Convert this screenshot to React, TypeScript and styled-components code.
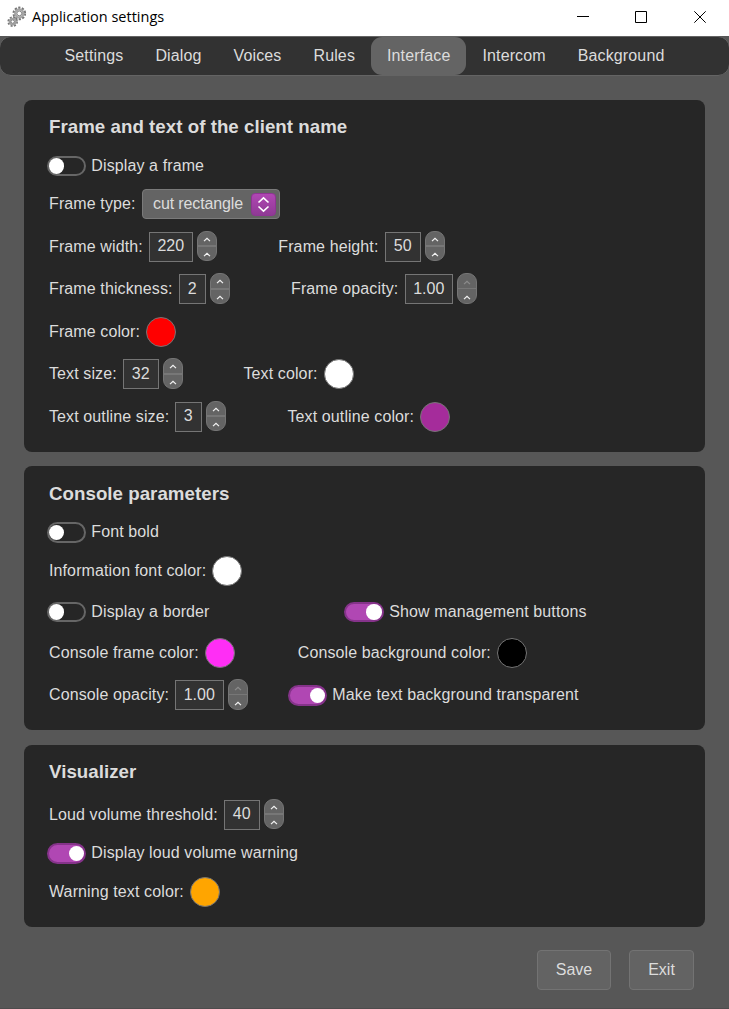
import React from 'react';
import styled, { createGlobalStyle } from 'styled-components';

const GlobalStyle = createGlobalStyle`
  * { box-sizing: border-box; }
  body {
    margin: 0;
    background: #575757;
    color: #dcdcdc;
    font: 16px "Liberation Sans", Arial, sans-serif;
  }
`;

const Window = styled.div`
  display: flex;
  flex-direction: column;
  height: 1009px;
  overflow: hidden;
  background: #575757;
  border-bottom: 1px solid #4e4c4d;
`;

const TitleBar = styled.header`
  display: flex;
  align-items: center;
  height: 36px;
  flex: none;
  padding: 0 23px 2px 7px;
  background: #fff;
  color: #000;
`;

const AppTitle = styled.span`
  flex: 1;
  margin-left: 5px;
  font: 14.5px/34px "Open Sans", "Noto Sans", sans-serif;
`;

const WindowControls = styled.div`
  display: grid;
  grid-template-columns: 58px 59px 12px;
`;

const Nav = styled.nav`
  display: flex;
  justify-content: center;
  height: 40px;
  flex: none;
  margin: 0 -1px;
  border: 1px solid #646464;
  border-radius: 12px;
  background: #323232;
  letter-spacing: 0.13px;
`;

const Tab = styled.a<{ $active?: boolean }>`
  padding: 0 16px;
  line-height: 37px;
  border-radius: 11px;
  background: ${p => (p.$active ? '#646464' : 'transparent')};
`;

const Cards = styled.main`
  display: flex;
  flex-direction: column;
  padding: 24px 24px 0;
`;

const Card = styled.section<{ $gap?: number }>`
  margin-bottom: ${p => p.$gap ?? 0}px;
  padding: 0 25px 20px;
  border-radius: 8px;
  background: #262626;
`;

const Heading = styled.h3<{ $h: number; $top?: number }>`
  height: ${p => p.$h}px;
  margin: 0;
  padding-top: ${p => p.$top ?? 16}px;
  font-size: 18.72px;
  line-height: 21px;
  font-weight: bold;
  letter-spacing: 0.03px;
`;

const Row = styled.div<{ $h?: number }>`
  display: flex;
  align-items: flex-start;
  height: ${p => p.$h ?? 30}px;
  white-space: nowrap;
`;

const Label = styled.label<{ $w?: number; $ml?: number }>`
  flex: none;
  width: ${p => (p.$w ? `${p.$w}px` : 'auto')};
  margin-left: ${p => p.$ml ?? 0}px;
  line-height: 29px;
  letter-spacing: 0.11px;
`;

const NumberBox = styled.div<{ $w: number; $lh: number }>`
  width: ${p => p.$w}px;
  height: 30px;
  padding-right: 0.5px;
  border: 1px solid #757575;
  background: #323232;
  line-height: ${p => p.$lh}px;
  text-align: center;
`;

const Stepper = styled.div<{ $h: number }>`
  display: flex;
  flex-direction: column;
  width: 20px;
  height: ${p => p.$h}px;
  margin: -1px 0 0 4px;
  border: 1px solid #757575;
  border-radius: 9px;
  background: #646464;
`;

const Step = styled.div<{ $dim?: boolean; $line?: number }>`
  display: flex;
  flex: 1;
  align-items: center;
  justify-content: center;
  padding-top: 2px;
  border-bottom: ${p => p.$line ?? 0}px solid #777;
  color: ${p => (p.$dim ? '#8c8c8c' : '#f4f4f4')};
`;

const Swatch = styled.div<{ $color: string }>`
  width: 30px;
  height: 30px;
  border: 1px solid #757575;
  border-radius: 50%;
  background: ${p => p.$color};
`;

const Switch = styled.span<{ $on?: boolean; $top: number; $ml: number }>`
  display: flex;
  flex: none;
  align-items: center;
  justify-content: ${p => (p.$on ? 'flex-end' : 'flex-start')};
  width: 39.5px;
  height: 20.5px;
  margin: ${p => p.$top}px 5.3px 0 ${p => p.$ml}px;
  border: 2px solid ${p => (p.$on ? '#85338a' : '#666')};
  border-radius: 11px;
  background: ${p => (p.$on ? '#b047b3' : '#262626')};
`;

const Knob = styled.i`
  width: 15.5px;
  height: 15.5px;
  border-radius: 50%;
  background: #fff;
`;

const Select = styled.div`
  display: flex;
  align-items: center;
  justify-content: space-between;
  width: 138px;
  height: 30px;
  padding: 0 3px 0 10px;
  border: 1px solid #7a7a7a;
  border-radius: 4px;
  background: #646464;
  line-height: 27px;
  letter-spacing: -0.12px;
`;

const SelectText = styled.span`
  height: 28px;
`;

const SelectArrow = styled.span`
  display: flex;
  align-items: center;
  justify-content: center;
  width: 25px;
  height: 23px;
  margin-top: 1px;
  border: 1px solid #8f3494;
  border-radius: 4px;
  background: linear-gradient(#b047b3, #8f3a95);
`;

const Footer = styled.footer`
  display: flex;
  justify-content: flex-end;
  gap: 18px;
  padding: 23px 35px 0 0;
`;

const Button = styled.button<{ $w: number }>`
  width: ${p => p.$w}px;
  height: 40px;
  padding: 0;
  border: 1px solid #737373;
  border-radius: 4px;
  background: #636363;
  color: #dcdcdc;
  font: inherit;
`;

const Gears = () => (
  <svg width="20" height="22" viewBox="0 0 20 22" fill="none">
    <circle cx="12.3" cy="7.4" r="5.2" stroke="#777" strokeWidth="3.2" strokeDasharray="2 1.27" />
    <circle cx="12.3" cy="7.4" r="4" stroke="#a6a6a6" strokeWidth="2.4" />
    <circle cx="12.3" cy="7.4" r="2.4" stroke="#666" strokeWidth="0.8" />
    <circle cx="5.7" cy="15.6" r="4" stroke="#777" strokeWidth="2.6" strokeDasharray="1.8 1.34" />
    <circle cx="5.7" cy="15.6" r="3" stroke="#a0a0a0" strokeWidth="1.9" />
    <circle cx="5.7" cy="15.6" r="1.7" stroke="#606060" strokeWidth="0.8" />
  </svg>
);

const Chevron = () => (
  <svg width="8" height="5" viewBox="0 0 8 5" fill="none" stroke="currentColor" strokeWidth="1.25">
    <path d="M1 4.1 4 1.4 7 4.1" />
  </svg>
);

interface NumberProps {
  value: string;
  w: number;
  raised?: boolean;
  atMax?: boolean;
}

const NumberInput = ({ value, w, raised, atMax }: NumberProps) => (
  <>
    <NumberBox $w={w} $lh={raised ? 25 : 27}>{value}</NumberBox>
    <Stepper $h={raised ? 30 : 31}>
      <Step $dim={atMax} $line={atMax ? 1 : 2}><Chevron /></Step>
      <Step><Chevron /></Step>
    </Stepper>
  </>
);

interface ToggleProps {
  on?: boolean;
  top?: number;
  ml?: number;
  children: string;
}

const Toggle = ({ on, top = 4.5, ml = -2.5, children }: ToggleProps) => (
  <>
    <Switch $on={on} $top={top} $ml={ml}><Knob /></Switch>
    <Label>{children}</Label>
  </>
);

const tabs = ['Settings', 'Dialog', 'Voices', 'Rules', 'Interface', 'Intercom', 'Background'];

export default function App() {
  return (
    <Window>
      <GlobalStyle />
      <TitleBar>
        <Gears />
        <AppTitle>Application settings</AppTitle>
        <WindowControls>
          <svg width="12" height="12" stroke="#000"><path d="M0 5.5H12" /></svg>
          <svg width="12" height="12" stroke="#000" fill="none"><path d="M.5.5H11.5V11.5H.5Z" /></svg>
          <svg width="12" height="12" stroke="#000"><path d="M.3.3 11.7 11.7M11.7.3.3 11.7" /></svg>
        </WindowControls>
      </TitleBar>
      <Nav>
        {tabs.map(t => <Tab key={t} $active={t === 'Interface'}>{t}</Tab>)}
      </Nav>
      <Cards>
        <Card $gap={14}>
          <Heading $h={51}>Frame and text of the client name</Heading>
          <Row $h={38}><Toggle>Display a frame</Toggle></Row>
          <Row $h={43}>
            <Label $w={93}>Frame type:</Label>
            <Select>
              <SelectText>cut rectangle</SelectText>
              <SelectArrow>
                <svg width="13" height="17" viewBox="0 0 13 17" fill="none" stroke="#fff" strokeWidth="1.6">
                  <path d="M1.5 6.5 6.5 1.8 11.5 6.5M1.5 10.5 6.5 15.2 11.5 10.5" />
                </svg>
              </SelectArrow>
            </Select>
          </Row>
          <Row $h={42}>
            <Label $w={100}>Frame width:</Label>
            <NumberInput value="220" w={44} raised />
            <Label $ml={61.3} $w={106.7}>Frame height:</Label>
            <NumberInput value="50" w={36} raised />
          </Row>
          <Row $h={43}>
            <Label $w={130}>Frame thickness:</Label>
            <NumberInput value="2" w={27} />
            <Label $ml={61} $w={114}>Frame opacity:</Label>
            <NumberInput value="1.00" w={48} atMax />
          </Row>
          <Row $h={42}>
            <Label $w={97}>Frame color:</Label>
            <Swatch $color="#ff0000" />
          </Row>
          <Row $h={43}>
            <Label $w={74}>Text size:</Label>
            <NumberInput value="32" w={36} />
            <Label $ml={60.5} $w={80.5}>Text color:</Label>
            <Swatch $color="#ffffff" />
          </Row>
          <Row>
            <Label $w={126}>Text outline size:</Label>
            <NumberInput value="3" w={27} raised />
            <Label $ml={61.5} $w={132.5}>Text outline color:</Label>
            <Swatch $color="#a52c9b" />
          </Row>
        </Card>
        <Card $gap={15}>
          <Heading $h={51} $top={17}>Console parameters</Heading>
          <Row $h={39}><Toggle top={5}>Font bold</Toggle></Row>
          <Row $h={41}>
            <Label $w={163}>Information font color:</Label>
            <Swatch $color="#ffffff" />
          </Row>
          <Row $h={41}>
            <Toggle>Display a border</Toggle>
            <Toggle on ml={134.9}>Show management buttons</Toggle>
          </Row>
          <Row $h={42}>
            <Label $w={156}>Console frame color:</Label>
            <Swatch $color="#ff2ef5" />
            <Label $ml={62.8} $w={199.2}>Console background color:</Label>
            <Swatch $color="#000000" />
          </Row>
          <Row>
            <Label $w={126}>Console opacity:</Label>
            <NumberInput value="1.00" w={49} atMax />
            <Toggle on top={5} ml={39.5}>Make text background transparent</Toggle>
          </Row>
        </Card>
        <Card>
          <Heading $h={55}>Visualizer</Heading>
          <Row $h={38}>
            <Label $w={175}>Loud volume threshold:</Label>
            <NumberInput value="40" w={36} raised />
          </Row>
          <Row $h={39}><Toggle on top={5}>Display loud volume warning</Toggle></Row>
          <Row>
            <Label $w={141}>Warning text color:</Label>
            <Swatch $color="#ffa500" />
          </Row>
        </Card>
      </Cards>
      <Footer>
        <Button $w={74}>Save</Button>
        <Button $w={65}>Exit</Button>
      </Footer>
    </Window>
  );
}
